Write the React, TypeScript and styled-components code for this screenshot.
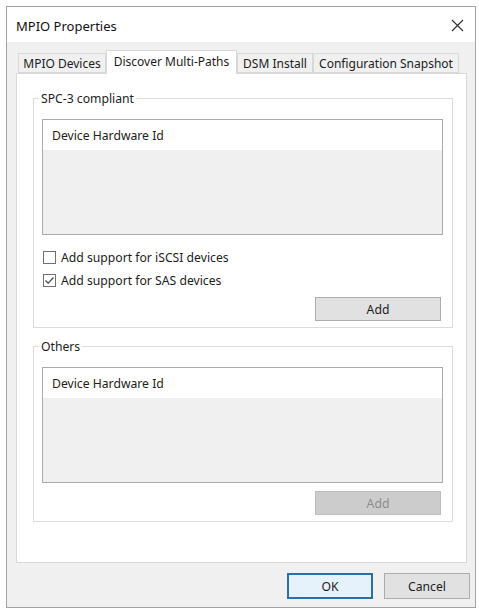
import * as React from "react";
import styled, { createGlobalStyle } from "styled-components";

const GlobalStyle = createGlobalStyle`
  body {
    margin: 0;
    background: #ffffff;
    font-family: "Noto Sans", "Open Sans", sans-serif;
    font-size: 12.2px;
    color: #1c1c1c;
  }
`;

const Screen = styled.div`
  padding: 6px 0 0 6px;
`;

const Window = styled.div`
  width: 470px;
  height: 602px;
  box-sizing: border-box;
  border: 1px solid #a3a3a3;
  background: #f0f0f0;
  display: flex;
  flex-direction: column;
`;

const TitleBar = styled.div`
  height: 35px;
  flex: none;
  background: #ffffff;
  display: flex;
  align-items: center;
  justify-content: space-between;
  padding: 2px 10px 0 9px;
  box-sizing: border-box;
  font-size: 13px;
  color: #111;
`;

const CloseButton = styled.div`
  width: 16px;
  height: 16px;
  display: flex;
  align-items: center;
  justify-content: center;
`;

const Body = styled.div`
  flex: 1;
  display: flex;
  flex-direction: column;
  padding-top: 8px;
`;

const TabArea = styled.div`
  padding: 0 8px 0 9px;
  display: flex;
  flex-direction: column;
`;

const TabStrip = styled.div`
  display: flex;
  align-items: flex-end;
  height: 23px;
  padding-left: 2px;
`;

const Tab = styled.div<{ $width: number; $active?: boolean }>`
  width: ${(p) => p.$width}px;
  box-sizing: border-box;
  height: ${(p) => (p.$active ? 24 : 20)}px;
  margin-bottom: ${(p) => (p.$active ? -1 : 0)}px;
  position: relative;
  z-index: ${(p) => (p.$active ? 1 : 0)};
  display: flex;
  align-items: center;
  justify-content: center;
  white-space: nowrap;
  font-size: 12px;
  background: ${(p) => (p.$active ? "#ffffff" : "#f0f0f0")};
  border: 1px solid #d9d9d9;
  border-bottom: ${(p) => (p.$active ? "none" : "1px solid #d9d9d9")};
  padding-bottom: ${(p) => (p.$active ? 3 : 0)}px;
`;

const Panel = styled.div`
  height: 490px;
  box-sizing: border-box;
  background: #ffffff;
  border: 1px solid #d9d9d9;
  padding: 16px 13px 0 16px;
  display: flex;
  flex-direction: column;
  gap: 10px;
`;

const Group = styled.fieldset`
  margin: 0;
  border: 1px solid #dcdcdc;
  padding: 12px 9px 6px 8px;
  display: flex;
  flex-direction: column;
`;

const GroupLabel = styled.legend`
  padding: 0 2px;
  margin-left: -3px;
  line-height: 17px;
`;

const DeviceList = styled.div`
  height: 116px;
  box-sizing: border-box;
  border: 1px solid #ababab;
  background: #f0f0f0;
  display: flex;
  flex-direction: column;
`;

const ListHeader = styled.div`
  height: 30px;
  flex: none;
  background: #ffffff;
  display: flex;
  align-items: center;
  padding-left: 9px;
`;

const Options = styled.div`
  margin-top: 11px;
  display: flex;
  flex-direction: column;
`;

const CheckRow = styled.label`
  height: 23px;
  display: flex;
  align-items: center;
  gap: 5px;
  padding-left: 1px;
`;

const Box = styled.span`
  width: 13px;
  height: 13px;
  box-sizing: border-box;
  border: 1px solid #707070;
  background: #ffffff;
  display: flex;
  align-items: center;
  justify-content: center;
`;

const ButtonRow = styled.div<{ $top: number }>`
  display: flex;
  justify-content: flex-end;
  margin-top: ${(p) => p.$top}px;
  padding-right: 2px;
`;

const Button = styled.button<{ $disabled?: boolean }>`
  width: 126px;
  height: 24px;
  box-sizing: border-box;
  font: inherit;
  padding: 0;
  color: ${(p) => (p.$disabled ? "#8c8c8c" : "#1c1c1c")};
  background: ${(p) => (p.$disabled ? "#cccccc" : "#e1e1e1")};
  border: 1px solid ${(p) => (p.$disabled ? "#bfbfbf" : "#adadad")};
`;

const Footer = styled.div`
  display: flex;
  justify-content: flex-end;
  gap: 11px;
  padding: 10px 5px 0 0;
`;

const DialogButton = styled.button<{ $primary?: boolean }>`
  width: 86px;
  height: 26px;
  box-sizing: border-box;
  font: inherit;
  padding: 0;
  color: #1c1c1c;
  background: ${(p) => (p.$primary ? "#e5f1fb" : "#e1e1e1")};
  border: ${(p) => (p.$primary ? "2px solid #2a6fa8" : "1px solid #adadad")};
`;

const CloseIcon = () => (
  <svg width="13" height="13" viewBox="0 0 13 13">
    <path d="M1 1 L12 12 M12 1 L1 12" stroke="#333" strokeWidth="1.2" fill="none" />
  </svg>
);

const Checkbox = ({ checked }: { checked?: boolean }) => (
  <Box>
    {checked && (
      <svg width="11" height="11" viewBox="0 0 11 11">
        <path d="M1.5 5.5 L4.2 8.2 L9.5 2.5" stroke="#444" strokeWidth="1.2" fill="none" />
      </svg>
    )}
  </Box>
);

const tabs = [
  { label: "MPIO Devices", width: 88 },
  { label: "Discover Multi-Paths", width: 131, active: true },
  { label: "DSM Install", width: 76 },
  { label: "Configuration Snapshot", width: 146 },
];

export default function App() {
  return (
    <Screen>
      <GlobalStyle />
      <Window>
        <TitleBar>
          <span>MPIO Properties</span>
          <CloseButton>
            <CloseIcon />
          </CloseButton>
        </TitleBar>
        <Body>
          <TabArea>
            <TabStrip>
              {tabs.map((t) => (
                <Tab key={t.label} $width={t.width} $active={t.active}>
                  {t.label}
                </Tab>
              ))}
            </TabStrip>
            <Panel>
              <Group>
                <GroupLabel>SPC-3 compliant</GroupLabel>
                <DeviceList>
                  <ListHeader>Device Hardware Id</ListHeader>
                </DeviceList>
                <Options>
                  <CheckRow>
                    <Checkbox />
                    Add support for iSCSI devices
                  </CheckRow>
                  <CheckRow>
                    <Checkbox checked />
                    Add support for SAS devices
                  </CheckRow>
                </Options>
                <ButtonRow $top={5}>
                  <Button>Add</Button>
                </ButtonRow>
              </Group>
              <Group>
                <GroupLabel>Others</GroupLabel>
                <DeviceList>
                  <ListHeader>Device Hardware Id</ListHeader>
                </DeviceList>
                <ButtonRow $top={8}>
                  <Button $disabled>Add</Button>
                </ButtonRow>
              </Group>
            </Panel>
          </TabArea>
          <Footer>
            <DialogButton $primary>OK</DialogButton>
            <DialogButton>Cancel</DialogButton>
          </Footer>
        </Body>
      </Window>
    </Screen>
  );
}
